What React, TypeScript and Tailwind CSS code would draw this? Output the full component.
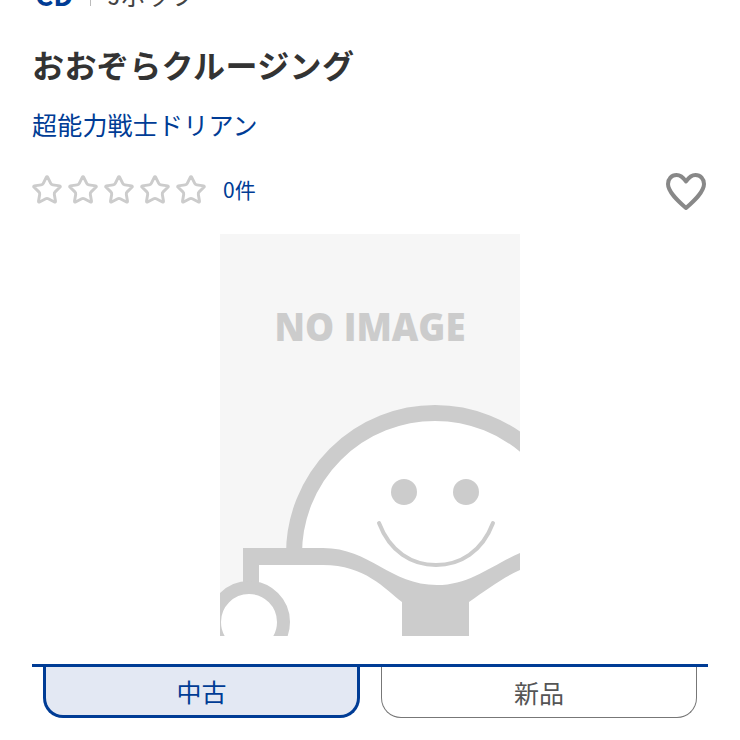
import { Star } from 'lucide-react';

const font = { fontFamily: '"Noto Sans CJK JP", "Noto Sans", sans-serif' };

function NoImage() {
  return (
    <svg viewBox="0 0 300 402" className="block w-[300px] h-[402px]">
      <rect width="300" height="402" fill="#f6f6f6" />
      <text
        x="150"
        y="107"
        textAnchor="middle"
        textLength="191"
        lengthAdjust="spacingAndGlyphs"
        fontFamily="'Open Sans', sans-serif"
        fontWeight="800"
        fontSize="39"
        fill="#cccccc"
      >
        NO IMAGE
      </text>
      <circle cx="215" cy="320" r="141" fill="#ffffff" stroke="#cccccc" strokeWidth="16" />
      <circle cx="184" cy="258" r="13" fill="#cccccc" />
      <circle cx="246" cy="258" r="13" fill="#cccccc" />
      <path d="M159 289C170 318 192 331 216 331C240 331 262 318 273 289" fill="none" stroke="#cccccc" strokeWidth="4" strokeLinecap="round" />
      <path d="M23 402V314H103C150 314 170 351 217 351C250 351 270 332 300 319V402Z" fill="#ffffff" />
      <path d="M23 350V314H103C150 314 170 351 217 351C250 351 270 332 300 319V336C284 343 266 356 249 368V402H182V368C165 355 145 331 103 331H39V350Z" fill="#cccccc" />
      <circle cx="29" cy="388" r="34.5" fill="#ffffff" stroke="#cccccc" strokeWidth="13" />
    </svg>
  );
}

export default function App() {
  return (
    <div className="w-[740px] h-[740px] overflow-hidden bg-white" style={font}>
      <div className="px-8">
        <div className="flex items-center h-[36px] -mt-[24px] text-[25px] leading-[36px]">
          <span className="pl-[3px] text-[28px] font-bold text-[#003c95]">CD</span>
          <span className="w-px h-[24px] bg-[#bbbbbb] ml-[17px] mr-[16px]"></span>
          <span className="text-[#444444]">Jポップ</span>
        </div>

        <h1 className="mt-[29px] text-[32px] leading-[46px] font-bold tracking-[0.4px] text-[#333333]">おおぞらクルージング</h1>

        <a className="block mt-[19px] text-[25px] leading-[36px] tracking-[0.2px] text-[#003c95]">超能力戦士ドリアン</a>

        <div className="flex items-center justify-between mt-[26px] h-[44px]">
          <div className="flex items-center">
            <div className="flex items-center gap-[4px] -ml-[1px]">
              <Star size={32} strokeWidth={2.2} className="text-[#cccccc]" />
              <Star size={32} strokeWidth={2.2} className="text-[#cccccc]" />
              <Star size={32} strokeWidth={2.2} className="text-[#cccccc]" />
              <Star size={32} strokeWidth={2.2} className="text-[#cccccc]" />
              <Star size={32} strokeWidth={2.2} className="text-[#cccccc]" />
            </div>
            <span className="ml-[16px] text-[21px] text-[#003c95]">0件</span>
          </div>
          <svg viewBox="0 0 40 37" className="w-[40px] h-[37px] mr-[2px] mt-[2px]" fill="none" stroke="#888888" strokeWidth="4" strokeLinejoin="round">
            <path d="M20 8.5C17 4 13.5 2 10.5 2C5.5 2 2 6 2 11C2 19 12 28 20 35C28 28 38 19 38 11C38 6 34.5 2 29.5 2C26.5 2 23 4 20 8.5Z" />
          </svg>
        </div>

        <div className="flex justify-center mt-[22px]">
          <NoImage />
        </div>

        <div className="mt-[28px] border-t-[3px] border-[#003c95] flex gap-[21px] px-[11px]">
          <button className="w-[317px] h-[51px] pt-[1px] bg-[#e3e8f3] border-[3px] border-t-0 border-[#003c95] rounded-b-[20px] text-[25px] text-[#003c95]">
            中古
          </button>
          <button className="w-[316px] h-[51px] pt-[1px] bg-white border border-t-0 border-[#777777] rounded-b-[20px] text-[25px] text-[#555555]">
            新品
          </button>
        </div>
      </div>
    </div>
  );
}
